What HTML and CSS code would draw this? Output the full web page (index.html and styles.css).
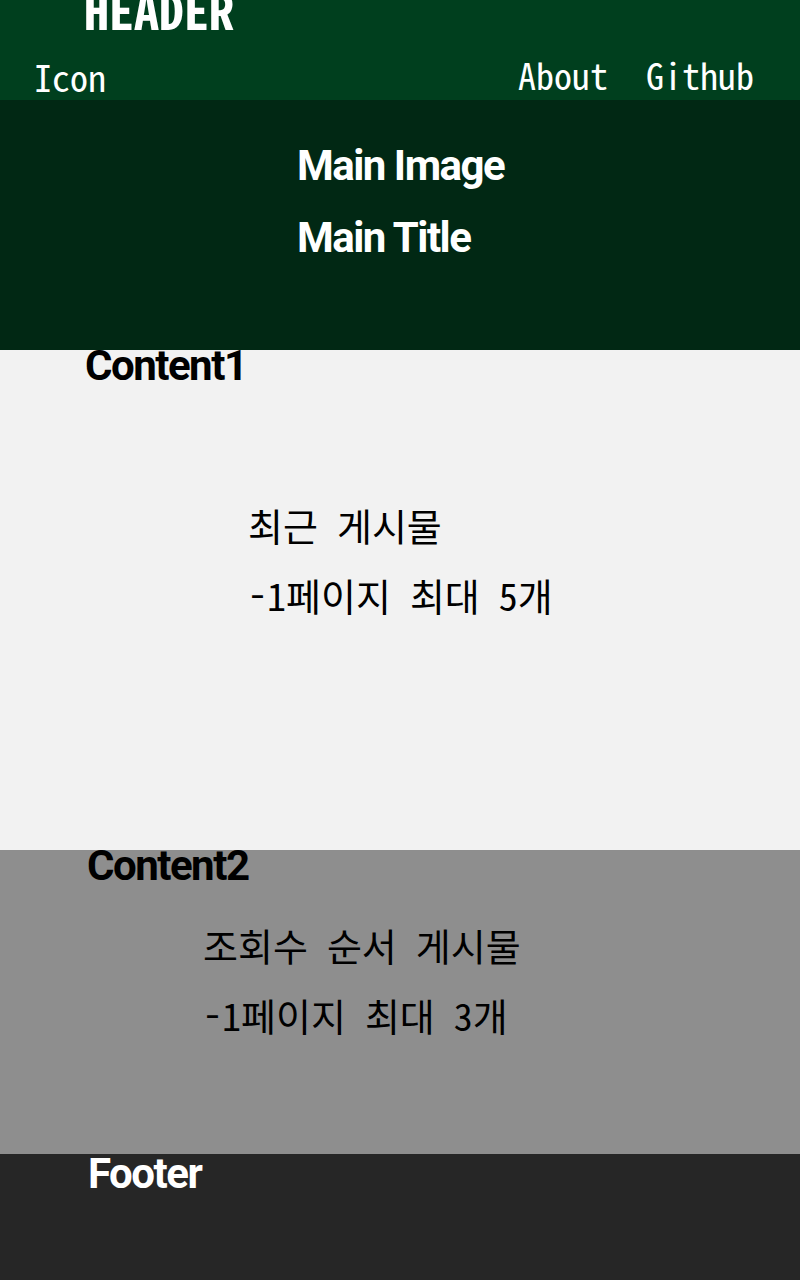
FILE: index.html
```html
<!DOCTYPE html>
<html lang="ko">
<head>
<meta charset="utf-8">
<title>Blog</title>
<link rel="stylesheet" href="styles.css">
</head>
<body>
<header class="site-header">
  <h1 class="brand">HEADER</h1>
  <nav class="nav">
    <span class="nav-icon">Icon</span>
    <div class="nav-links">
      <a class="nav-link" href="#">About</a>
      <a class="nav-link" href="#">Github</a>
    </div>
  </nav>
</header>
<section class="hero">
  <h2 class="hero-line">Main Image</h2>
  <h2 class="hero-line">Main Title</h2>
</section>
<section class="content content-recent">
  <h2 class="section-title">Content1</h2>
  <div class="post-info">
    <p class="post-line">최근 게시물</p>
    <p class="post-line">-1페이지 최대 5개</p>
  </div>
</section>
<section class="content content-popular">
  <h2 class="section-title">Content2</h2>
  <div class="post-info">
    <p class="post-line">조회수 순서 게시물</p>
    <p class="post-line">-1페이지 최대 3개</p>
  </div>
</section>
<footer class="site-footer">
  <h2 class="section-title">Footer</h2>
</footer>
</body>
</html>
```

FILE: styles.css
```css
html, body {
  margin: 0;
  padding: 0;
}
body {
  font-family: "Noto Sans Mono CJK KR", "Noto Sans CJK KR", "DejaVu Sans Mono", monospace;
  background: #262626;
}
h1, h2, p {
  margin: 0;
}

.site-header {
  height: 100px;
  background: #003f1e;
  color: #ffffff;
  display: flex;
  flex-direction: column;
}
.brand {
  font-family: "Noto Sans Mono CJK KR", "Noto Sans CJK KR", monospace;
  font-weight: 700;
  font-size: 50px;
  line-height: 1;
  margin-top: -17px;
  padding-left: 84px;
}
.nav {
  display: flex;
  justify-content: space-between;
  align-items: flex-start;
  margin-top: 23px;
  padding: 0 46px 0 34px;
  font-size: 36px;
  line-height: 1;
}
.nav-icon {
  padding-top: 2px;
}
.nav-links {
  display: flex;
  gap: 38px;
}
.nav-link {
  color: #ffffff;
  text-decoration: none;
}

.hero {
  height: 250px;
  box-sizing: border-box;
  background: #012814;
  color: #ffffff;
  padding: 30px 0 0 297px;
}
.hero-line {
  font-family: Roboto, "Noto Sans", sans-serif;
  font-weight: 700;
  font-size: 42px;
  line-height: 72px;
  letter-spacing: -1.5px;
}

.section-title {
  font-family: Roboto, "Noto Sans", sans-serif;
  font-weight: 700;
  font-size: 42px;
  line-height: 42px;
  letter-spacing: -1.5px;
  margin-top: -5px;
}
.content {
  box-sizing: border-box;
  color: #000000;
  display: flow-root;
}
.content-recent {
  height: 500px;
  background: #f2f2f2;
  padding-left: 85px;
}
.content-popular {
  height: 304px;
  background: #8e8e8e;
  padding-left: 87px;
}
.post-info {
  font-size: 38px;
  line-height: 70px;
}
.content-recent .post-info {
  margin-top: 103px;
  padding-left: 163px;
}
.content-popular .post-info {
  margin-top: 23px;
  padding-left: 116px;
}

.site-footer {
  height: 126px;
  box-sizing: border-box;
  background: #262626;
  color: #ffffff;
  padding-left: 88px;
  display: flow-root;
}
.site-footer .section-title {
  margin-top: -1px;
}
```
